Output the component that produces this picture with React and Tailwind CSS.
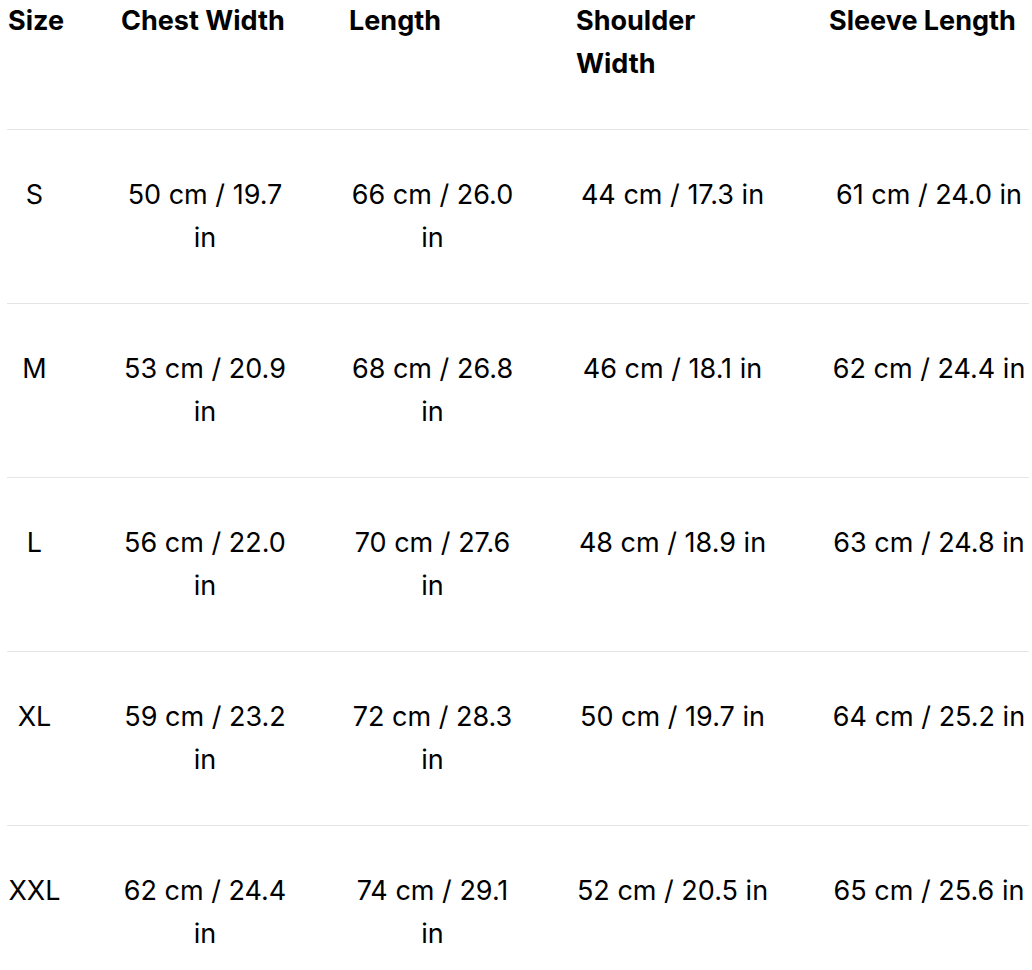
import React from "react";

const headers = ["Size", "Chest Width", "Length", "Shoulder Width", "Sleeve Length"];
const rows = [
  ["S", "50 cm / 19.7 in", "66 cm / 26.0 in", "44 cm / 17.3 in", "61 cm / 24.0 in"],
  ["M", "53 cm / 20.9 in", "68 cm / 26.8 in", "46 cm / 18.1 in", "62 cm / 24.4 in"],
  ["L", "56 cm / 22.0 in", "70 cm / 27.6 in", "48 cm / 18.9 in", "63 cm / 24.8 in"],
  ["XL", "59 cm / 23.2 in", "72 cm / 28.3 in", "50 cm / 19.7 in", "64 cm / 25.2 in"],
  ["XXL", "62 cm / 24.4 in", "74 cm / 29.1 in", "52 cm / 20.5 in", "65 cm / 25.6 in"],
];

const grid = "grid grid-cols-[53px_168px_167px_193px_200px] gap-x-[60px] pl-[1px]";

export default function App() {
  return (
    <div
      className="bg-white text-black w-[1032px] h-[970px] overflow-hidden"
      style={{ fontFamily: "Inter, 'Noto Sans', sans-serif" }}
    >
      <div className="ml-[7px] w-[1022px] -mt-[1px] text-[27px] leading-[43px]">
        <div className={`${grid} pb-[44px] border-b border-[#e5e5e5] font-bold`}>
          {headers.map((h) => (
            <div key={h} className="text-left">
              {h}
            </div>
          ))}
        </div>
        {rows.map((r) => (
          <div key={r[0]} className={`${grid} pt-[43px] pb-[44px] border-b border-[#e5e5e5]`}>
            {r.map((c, i) => (
              <div key={i} className="text-center">
                {c}
              </div>
            ))}
          </div>
        ))}
      </div>
    </div>
  );
}
